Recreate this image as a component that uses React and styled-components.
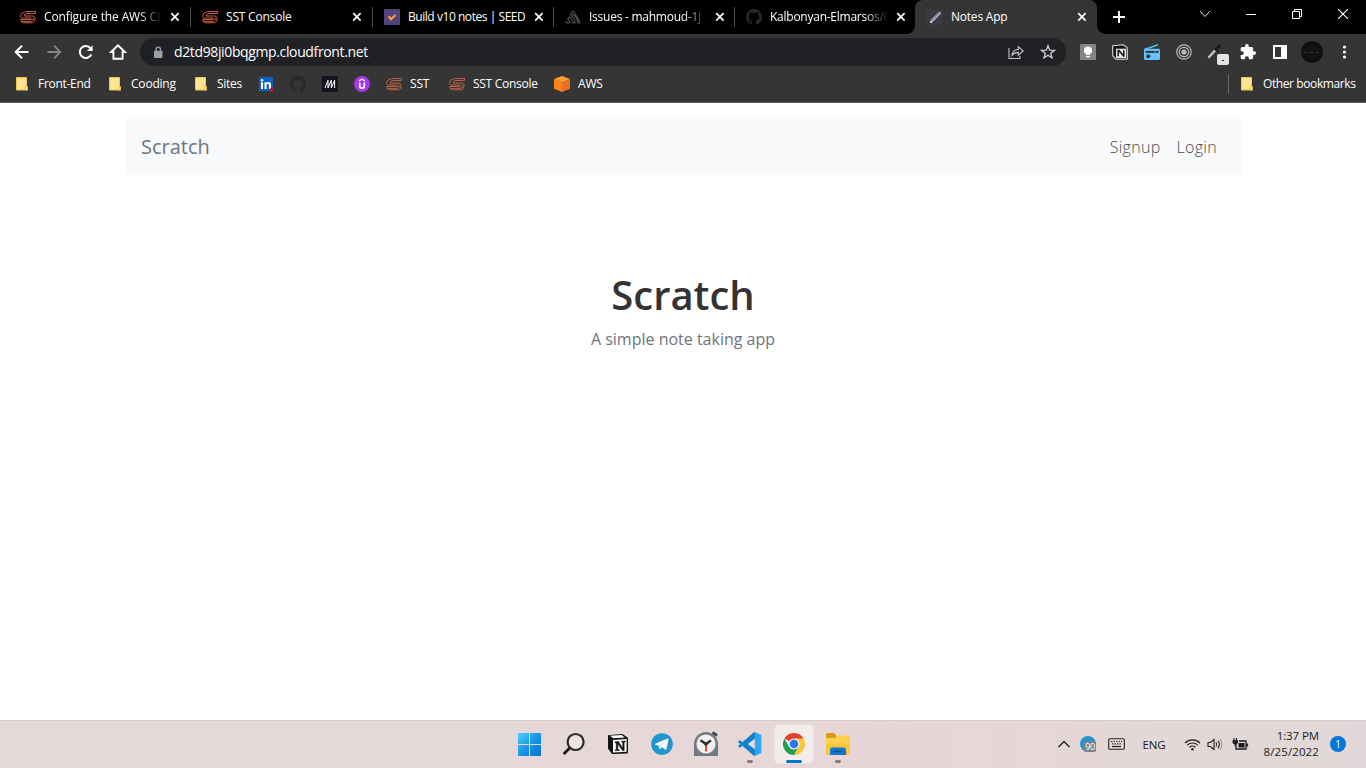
import React from 'react';
import styled, { createGlobalStyle, css } from 'styled-components';

const GlobalStyle = createGlobalStyle`
  *, *::before, *::after { box-sizing: border-box; }
  html, body { margin: 0; padding: 0; background: #fff; }
  body { font-family: "Open Sans", "Noto Sans", sans-serif; overflow: hidden; }
  svg { display: block; flex: none; }
`;

const Screen = styled.div`
  width: 1366px;
  height: 768px;
  display: flex;
  flex-direction: column;
  background: #fff;
`;

/* ---------- tab strip ---------- */
const TabStrip = styled.div`
  height: 34px;
  flex: none;
  display: flex;
  background: #000;
  padding-left: 8px;
`;
const Tab = styled.div`
  width: ${(p) => p.$w}px;
  height: 34px;
  flex: none;
  display: flex;
  align-items: center;
  padding-left: 12px;
  position: relative;
  ${(p) =>
    p.$active
      ? css`
          background: #353535;
          border-radius: 8px 8px 0 0;
          &::before, &::after {
            content: '';
            position: absolute;
            bottom: 0;
            width: 8px;
            height: 8px;
          }
          &::before { left: -8px; background: radial-gradient(circle at 0 0, transparent 7.5px, #353535 8px); }
          &::after { right: -8px; background: radial-gradient(circle at 100% 0, transparent 7.5px, #353535 8px); }
        `
      : ''}
`;
const TabDivider = styled.i`
  position: absolute;
  right: -1px;
  top: 7px;
  width: 1px;
  height: 20px;
  background: #4a4a4a;
`;
const TabTitle = styled.span`
  width: 118px;
  margin: 0 8px;
  height: 18px;
  line-height: 18px;
  font-size: 12px;
  letter-spacing: ${(p) => p.$ls || 0}px;
  color: #fff;
  white-space: nowrap;
  overflow: hidden;
  ${(p) => p.$fade && 'mask-image: linear-gradient(90deg, #000 94px, transparent 118px);'}
`;
const NewTab = styled.div`
  width: 44px;
  display: flex;
  align-items: center;
  justify-content: center;
`;
const WindowControls = styled.div`
  margin-left: auto;
  display: flex;
  height: 28px;
`;
const WindowButton = styled.div`
  width: 46px;
  display: flex;
  align-items: center;
  justify-content: center;
`;

/* ---------- toolbar ---------- */
const Toolbar = styled.div`
  height: 36px;
  flex: none;
  display: flex;
  align-items: center;
  background: #353535;
  padding-left: 6px;
`;
const ToolButton = styled.div`
  width: 32px;
  height: 32px;
  flex: none;
  display: flex;
  align-items: center;
  justify-content: center;
`;
const Omnibox = styled.div`
  width: 926px;
  height: 28px;
  margin: 0 6px;
  border-radius: 14px;
  background: #202124;
  display: flex;
  align-items: center;
  padding: 0 2px 0 13px;
`;
const Address = styled.span`
  flex: 1;
  margin-left: 11px;
  font-size: 14px;
  line-height: 20px;
  letter-spacing: -0.37px;
  color: #fff;
`;

/* ---------- bookmarks ---------- */
const BookmarksBar = styled.div`
  height: 33px;
  flex: none;
  display: flex;
  align-items: flex-start;
  padding: 5px 0 0 14px;
  background: #353535;
  border-bottom: 1px solid #5b5b5b;
`;
const Bookmark = styled.div`
  width: ${(p) => p.$w}px;
  height: 18px;
  flex: none;
  display: flex;
  align-items: center;
  gap: 8px;
`;
const BookmarkLabel = styled.span`
  font-size: 12px;
  line-height: 18px;
  letter-spacing: ${(p) => p.$ls || 0}px;
  color: #fff;
  white-space: nowrap;
`;
const OtherBookmarks = styled.div`
  margin-left: auto;
  padding-left: 10px;
  width: 138px;
  height: 18px;
  display: flex;
  align-items: center;
  gap: 8px;
  border-left: 1px solid #6a6a6a;
`;

/* ---------- page ---------- */
const Page = styled.main`
  flex: 1;
  display: flex;
  flex-direction: column;
  align-items: center;
  padding-top: 16px;
`;
const Navbar = styled.nav`
  width: 1116px;
  height: 56px;
  display: flex;
  align-items: center;
  padding: 0 24px 0 16px;
  background: #f8f9fb;
`;
const Brand = styled.a`
  font-size: 20px;
  line-height: 30px;
  color: #6c757d;
  margin-right: auto;
`;
const NavLink = styled.a`
  font-size: 16px;
  line-height: 24px;
  font-weight: 300;
  letter-spacing: 0.3px;
  color: #4c4c4c;
  margin-left: 16px;
`;
const Lander = styled.section`
  padding-top: 96px;
  text-align: center;
`;
const Title = styled.h1`
  margin: 0 0 8px;
  font-size: 40px;
  line-height: 48px;
  font-weight: 600;
  color: #333;
`;
const Subtitle = styled.p`
  margin: 0;
  font-size: 16px;
  line-height: 24px;
  color: #6c757d;
`;

/* ---------- taskbar ---------- */
const Taskbar = styled.footer`
  height: 48px;
  flex: none;
  display: flex;
  align-items: stretch;
  background: linear-gradient(90deg, #e2d9d8 0, #e5d8d8 35%, #e8d6d7 65%, #e0d8d8 100%);
  box-shadow: inset 0 1px #d8cdcd;
`;
const Apps = styled.div`
  display: flex;
  margin-left: 508px;
`;
const AppSlot = styled.div`
  width: 44px;
  display: flex;
  align-items: center;
  justify-content: center;
`;
const AppTile = styled.div`
  width: 38px;
  height: 38px;
  border-radius: 4px;
  display: flex;
  align-items: center;
  justify-content: center;
  position: relative;
  ${(p) => p.$focused && 'background: #f4ebeb; box-shadow: 0 0 0 1px #ebe0e0;'}
`;
const RunMark = styled.i`
  position: absolute;
  bottom: 0;
  left: 50%;
  transform: translateX(-50%);
  width: ${(p) => (p.$focused ? 16 : 6)}px;
  height: 3px;
  border-radius: 2px;
  background: ${(p) => (p.$focused ? '#0a74cc' : '#857f80')};
`;
const Tray = styled.div`
  margin-left: auto;
  display: flex;
  align-items: center;
  padding-right: 20px;
  color: #1b1b1b;
`;
const TrayItem = styled.div`
  width: ${(p) => p.$w}px;
  display: flex;
  justify-content: center;
`;
const Language = styled.span`
  width: 48px;
  padding-right: 4px;
  text-align: center;
  font-size: 11.5px;
  letter-spacing: -0.2px;
`;
const Clock = styled.div`
  width: 66px;
  margin-right: 11px;
  text-align: right;
  font-size: 11.5px;
  line-height: 16px;
  white-space: nowrap;
`;
const ClockTime = styled.div`letter-spacing: -0.1px;`;
const ClockDate = styled.div`letter-spacing: 0.12px;`;
const Notice = styled.span`
  width: 16px;
  height: 16px;
  border-radius: 50%;
  background: #0078d7;
  color: #fff;
  font-size: 10.5px;
  line-height: 16px;
  text-align: center;
`;

/* ---------- icons ---------- */
const Svg = ({ s = 16, w, h, vb, children, ...rest }) => (
  <svg width={w || s} height={h || s} viewBox={vb || `0 0 ${w || s} ${h || s}`} fill="none" {...rest}>
    {children}
  </svg>
);
const SstIcon = ({ color = '#d9694c' }) => (
  <Svg stroke={color} strokeWidth=".9" strokeLinejoin="round">
    <path d="M15.500 2.500H5.500L1.500 4.500.5 7.500l1 1.500h9.500v1.500H.700" />
    <path d="M15.300 4.500H6L4.500 5.500v1.500h8.500l2.200 1.500-.7 4-2 1.300H3.500L1 12.500" />
    <path d="M15.500 2.500v2M.7 10.500l.5 1.900h10.300l1.500-1.400.4-2.200" />
  </Svg>
);
const SeedIcon = () => (
  <Svg>
    <rect width="16" height="16" rx="1" fill="#51437f" />
    <path d="M4.500 7.300l2.500 2.900 4.500-4.300" stroke="#f9a13a" strokeWidth="2.1" />
  </Svg>
);
const SentryIcon = () => (
  <Svg stroke="#4d4a50" strokeWidth="1.2" strokeLinejoin="round">
    <path d="M5.2 6.300L7.200 2.600c.4-.7 1.200-.7 1.600 0l6 10c.4.7.1 1.300-.6 1.300h-1.500c.1-4-2.200-7.300-5.700-8.800" />
    <path d="M5.200 6.300c3 1.300 4.800 4.100 4.900 7.600H7.900c-.2-2.500-1.500-4.500-3.900-5.600L2.700 10.500c1.600.7 2.500 1.800 2.700 3.400H1.800c-.7 0-1-.7-.6-1.300l.5-.8" />
  </Svg>
);
const GithubIcon = () => (
  <Svg vb="0 0 16 16">
    <path fill="#24292f" d="M8 0C3.580 0 0 3.580 0 8c0 3.540 2.290 6.530 5.470 7.590.4.070.55-.17.55-.38 0-.19-.01-.82-.01-1.490-2.010.37-2.530-.49-2.690-.94-.09-.23-.48-.94-.82-1.130-.28-.15-.68-.52-.01-.53.63-.01 1.080.58 1.230.82.72 1.210 1.870.87 2.330.66.070-.52.28-.87.51-1.070-1.780-.2-3.640-.89-3.640-3.950 0-.87.31-1.590.82-2.150-.08-.2-.36-1.020.08-2.120 0 0 .67-.21 2.200.82.64-.18 1.320-.27 2-.27s1.360.09 2 .27c1.530-1.040 2.200-.82 2.200-.82.44 1.100.16 1.920.08 2.120.51.56.82 1.270.82 2.150 0 3.070-1.870 3.750-3.650 3.950.29.25.54.73.54 1.480 0 1.070-.01 1.930-.01 2.200 0 .21.15.46.55.38A8.010 8.010 0 0 0 16 8c0-4.420-3.580-8-8-8z" />
  </Svg>
);
const PencilIcon = () => (
  <Svg>
    <rect width="16" height="16" fill="#3b3b3f" />
    <path d="M3 14l1-3.200L12.300 2.400l1.900 1.800L6 12.700z" fill="#b9b6d8" />
    <path d="M4.500 12L12.700 3.500" stroke="#5b5877" strokeWidth=".8" />
    <path d="M3 14l.7-2 1.500 1.300z" fill="#fff" />
  </Svg>
);
const CloseIcon = () => (
  <Svg s={10} stroke="#fff" strokeWidth="1.7"><path d="M1.200 1.200l7.400 7.400M8.600 1.200L1.200 8.600" /></Svg>
);
const FolderIcon = () => (
  <Svg>
    <path d="M2.500 1.500h10v9l1 3.500H2.500z" fill="#ffe591" stroke="#efc64d" />
    <path d="M11 14V11.500q0-1 1-1h1.500V14z" fill="#ffe591" stroke="#eabf42" strokeWidth=".9" />
  </Svg>
);
const LinkedinIcon = () => (
  <Svg>
    <rect x="1" y="1" width="14" height="14" rx="1" fill="#0a66c2" />
    <path d="M3 6.300h2V13H3zM6.500 6.300h2v.9c.5-.7 1.100-1.100 2-1.100 1.800 0 2.500 1.100 2.500 2.900v4h-2V9.400c0-.9-.3-1.500-1.100-1.500-.9 0-1.400.6-1.400 1.600V13h-2z" fill="#fff" />
    <circle cx="4" cy="4.200" r="1.200" fill="#fff" />
    <circle cx="13.800" cy="13.400" r="2" fill="#d11124" />
  </Svg>
);
const MIcon = () => (
  <Svg>
    <rect width="16" height="16" fill="#14141f" />
    <path d="M3 12L6 4.300V12L9.300 4.300V12L12.600 4.300V12" stroke="#fff" strokeWidth="1" />
  </Svg>
);
const UdemyIcon = () => (
  <Svg>
    <circle cx="8" cy="8" r="8" fill="#a435f0" />
    <path d="M5 4.900l3-1.700 3 1.700" stroke="#fff" strokeWidth="1.300" />
    <path d="M5.700 6.400v3.300c0 1.600.8 2.500 2.300 2.500s2.300-.9 2.300-2.500V6.400" stroke="#fff" strokeWidth="1.700" />
  </Svg>
);
const AwsIcon = () => (
  <Svg>
    <path d="M8 0l8 3-8 3.600L0 3z" fill="#ff9c2e" />
    <path d="M0 3l8 3.600V16l-8-3.300z" fill="#f8871f" />
    <path d="M16 3L8 6.600V16l8-3.300z" fill="#ef701c" />
  </Svg>
);
const NotionIcon = ({ s = 16 }) => (
  <Svg s={s} vb="0 0 22 22">
    <path d="M1 2.300L14.500 1q1-.1 1.800.5l3.900 2.800q.8.600.8 1.500v13.400q0 1.300-1.300 1.400L6.300 21q-1 .1-1.600-.6L1.500 16.300Q1 15.600 1 14.800z" fill="#141414" />
    <path d="M2.900 2.700l11.600-.8 3.400 2.500-11.700.8z" fill="#fff" />
    <path d="M6 6.900L19.600 6v12.700L6 19.500z" fill="#fff" />
    <path d="M8 8.800l3.500-.3 4.200 6.700V9.300l-1.300-.2v-.9l4-.2v.9l-1.200.4v8.300l-1.700.2-4.600-7.100v5.700l1.400.3v.9l-4.200.2v-.9l1.200-.4V9.900L8 9.700z" fill="#141414" stroke="#141414" strokeWidth=".5" />
  </Svg>
);

const toolIcons = {
  back: <Svg stroke="#fff" strokeWidth="2"><path d="M14.500 8H2M8 1.700L1.700 8 8 14.300" /></Svg>,
  forward: <Svg stroke="#858585" strokeWidth="1.800"><path d="M1.500 8H14M8 1.700L14.300 8 8 14.300" /></Svg>,
  reload: <Svg><path d="M13.300 10.500A6 6 0 1 1 12.500 4.100" stroke="#fff" strokeWidth="2" /><path d="M14.700 1.200V7H8.900z" fill="#fff" /></Svg>,
  home: <Svg s={18} stroke="#fff" strokeWidth="1.900"><path d="M9 2.300L2.200 9h2.200v6.800h9.200V9h2.200z" /></Svg>,
  lock: <Svg w={10} h={13}><rect x="1" y="4.800" width="8.500" height="7.200" rx="1" fill="#9aa0a6" /><path d="M3 5V3.400a2.200 2.200 0 0 1 4.500 0V5" stroke="#9aa0a6" strokeWidth="1.400" /></Svg>,
  share: <Svg stroke="#c4c6c9" strokeWidth="1.100"><path d="M1 4v10.500h11V12M4 11.300c.4-3.800 2.400-5.700 6.300-5.800V2.700L15.200 7l-4.900 4.200V8.400C7.500 8.300 5.600 9.200 4 11.300z" /></Svg>,
  star: <Svg stroke="#d0d1d3" strokeWidth="1.300"><path d="M8 1.800l1.700 4.400 4.700.2-3.700 2.900 1.300 4.500L8 11.300l-4 2.500 1.300-4.500-3.700-2.900 4.700-.2z" /></Svg>,
};
const extensions = {
  bulb: <Svg><rect width="16" height="16" rx="1" fill="#80868b" /><path d="M8 2.600a4 4 0 0 0-2 7.500v.9h4v-.9a4 4 0 0 0-2-7.500z" fill="#fff" /><path d="M6 12.700h4" stroke="#fff" strokeWidth="1.300" /></Svg>,
  notion: (
    <Svg vb="0 0 22 22">
      <path d="M1 2.300L15 1l6 4v16L5.500 21 1 16z" fill="#151515" stroke="#ddd" strokeWidth="1.500" strokeLinejoin="round" />
      <path d="M5.500 6.500h14v13h-14z" fill="#e4e4e4" />
      <path d="M8.500 17V8.800h1l6.500 7.800h.2V8.500" stroke="#151515" strokeWidth="2.100" />
    </Svg>
  ),
  radio: (
    <Svg w={18} h={16}>
      <path d="M1.500 5.500L15 .8" stroke="#55bdf5" strokeWidth="1.500" />
      <rect x="1" y="4.800" width="16" height="11.200" rx="1.400" fill="#62c4fb" />
      <path d="M2.500 6.900h13v2h-13z" fill="#353535" />
      <path d="M12 6.500v2" stroke="#62c4fb" />
      <circle cx="5.200" cy="12.300" r="2.100" fill="#353535" />
    </Svg>
  ),
  rings: <Svg stroke="#b9b9b9" strokeWidth="1.200"><circle cx="8" cy="8" r="7.200" /><circle cx="8" cy="8" r="4.700" /><circle cx="8" cy="8" r="2.600" fill="#bbb" stroke="none" /></Svg>,
  picker: (
    <Svg w={26} h={26}>
      <path d="M6 18L12.500 11" stroke="#c4c4c4" strokeWidth="2.500" strokeLinecap="round" />
      <path d="M11.500 9.500l4 3.500" stroke="#1a1a1a" strokeWidth="1.500" />
      <path d="M13 10.500l3.500-3.500" stroke="#1a1a1a" strokeWidth="3" strokeLinecap="round" />
      <rect x="14" y="15" width="12" height="11" rx="2" fill="#e4e4e4" /><rect x="19" y="21" width="2" height="1" fill="#333" />
    </Svg>
  ),
  puzzle: <Svg vb="1 1 22 22"><path fill="#fff" d="M20.500 11H19V7c0-1.100-.9-2-2-2h-4V3.500a2.500 2.500 0 0 0-5 0V5H4c-1.100 0-2 .9-2 2v3.800h1.500c1.500 0 2.700 1.200 2.700 2.700S5 16.200 3.500 16.200H2V20c0 1.100.9 2 2 2h3.800v-1.500c0-1.500 1.200-2.700 2.700-2.700s2.700 1.200 2.700 2.700V22H17c1.100 0 2-.9 2-2v-4h1.500a2.500 2.500 0 0 0 0-5z" /></Svg>,
  panel: <Svg><path d="M1 1h14v14H1zM3 3v10h6V3z" fill="#fff" fillRule="evenodd" /></Svg>,
  avatar: <Svg s={22}><circle cx="11" cy="11" r="11" fill="#121212" /><path d="M2.500 11.500h17" stroke="#333" strokeDasharray="3.500 2.500" /></Svg>,
  menu: <Svg fill="#fff"><circle cx="8.500" cy="3" r="1.600" fill="#fff" /><circle cx="8.500" cy="8" r="1.600" fill="#fff" /><circle cx="8.500" cy="13" r="1.600" fill="#fff" /></Svg>,
};

const StartIcon = () => (
  <Svg s={24}>
    <defs>
      <linearGradient id="start" x1="0" y1="0" x2="24" y2="24" gradientUnits="userSpaceOnUse">
        <stop stopColor="#4fd0fb" /><stop offset=".5" stopColor="#1897e4" /><stop offset="1" stopColor="#0670ca" />
      </linearGradient>
    </defs>
    <path fill="url(#start)" d="M0 1h11v11H0zM12 1h11v11H12zM0 13h11v11H0zM12 13h11v11H12z" />
  </Svg>
);
const SearchIcon = () => (
  <Svg s={24}>
    <circle cx="13.600" cy="10" r="8" stroke="#2a2a2a" strokeWidth="2.200" fill="#eee3e3" />
    <path d="M7.700 16L2.500 21.300" stroke="#1d1d1d" strokeWidth="2.800" strokeLinecap="round" />
  </Svg>
);
const TelegramIcon = () => (
  <Svg s={22}>
    <circle cx="11" cy="11" r="10.800" fill="#2295ce" />
    <path d="M4.300 10.800l12.200-5.200c.7-.3 1.200.1 1 .9l-2 9.500c-.2.800-.7.900-1.300.5L11 14.200l-1.600 1.600c-.5.500-.9.300-1-.3l-.8-2.800-3.200-1c-.7-.2-.7-.6-.1-.9z" fill="#fff" />
    <path d="M8.200 12.400l6.400-4.600-4.900 5.300-.5 2z" fill="#b9d9ea" />
  </Svg>
);
const ClockIcon = () => (
  <Svg s={26}>
    <path d="M19.500 1.500l4.500 3" stroke="#40464c" strokeWidth="3" />
    <path d="M1 13A12 12 0 0 1 13 1a12 12 0 0 1 12 12v12H1z" fill="#717a82" />
    <circle cx="13" cy="13" r="9.600" fill="#f1f1f1" />
    <path d="M13 13v7.500" stroke="#e24a26" strokeWidth="2" />
    <path d="M7.500 9.200L13 13l5-3.600" stroke="#2b2b2b" strokeWidth="2.300" />
    <circle cx="13" cy="13" r="1.800" fill="#2b2b2b" />
  </Svg>
);
const CodeIcon = () => (
  <Svg s={26} vb="0 0 24 24">
    <path d="M17 1L6.500 11.400 2.600 8.500l-1.400.9v1l13.800 12 2 .7z" fill="#1080cc" />
    <path d="M17 23L6.500 12.600 2.600 15.500l-1.400-.9v-1l13.800-12 2-.7z" fill="#1080cc" />
    <path d="M16.500 1L22.500 3.600v16.800L16.500 23z" fill="#2fa8f3" />
    <path d="M16.500 7v10L10 12z" fill="#e7d7d8" />
  </Svg>
);
const ChromeIcon = () => (
  <Svg s={22} vb="0 0 24 24">
    <circle cx="12" cy="12" r="12" fill="#fff" />
    <path d="M12 12L1.600 6A12 12 0 0 1 22.400 6z" fill="#df4032" />
    <path d="M12 6h10.400A12 12 0 0 1 12 24l5.200-9z" fill="#fcc934" />
    <path d="M6.800 15L1.600 6A12 12 0 0 0 12 24l5.200-9z" fill="#269c4c" />
    <circle cx="12" cy="12" r="6" fill="#fff" />
    <circle cx="12" cy="12" r="4.800" fill="#2f75e5" />
  </Svg>
);
const ExplorerIcon = () => (
  <Svg w={26} h={24}>
    <path d="M1 3q0-2 2-2h6l2.500 3v5H1z" fill="#d99a16" />
    <path d="M1 6h9l2-2.500h11q2 0 2 2V21q0 2-2 2H3q-2 0-2-2z" fill="#fdd04b" />
    <path d="M1 12h24v9q0 2-2 2H3q-2 0-2-2z" fill="#fbc53a" />
    <path d="M5 23v-5q0-2.500 2.500-2.500h11q2.500 0 2.500 2.500v5z" fill="#1277cf" />
    <path d="M8.500 19.500h9" stroke="#0b5399" strokeWidth="1.500" />
  </Svg>
);
const trayIcons = {
  chevron: <Svg w={14} h={10} stroke="#222" strokeWidth="1.400"><path d="M1.500 8L7 2.500 12.500 8" /></Svg>,
  keyboard: (
    <Svg w={17} h={12} stroke="#222">
      <rect x=".7" y=".7" width="15.600" height="10.600" rx="1.300" strokeWidth="1.100" />
      <path d="M3 3.500h11M4 5.800h10" strokeDasharray="1.300 1.200" strokeWidth="1.200" /><path d="M4 8.500h9" strokeWidth="1.200" />
    </Svg>
  ),
  wifi: (
    <Svg w={17} h={13} stroke="#222" strokeWidth="1.200">
      <path d="M1 5a10.600 10.600 0 0 1 15 0M3.200 7.200a7.500 7.500 0 0 1 10.600 0M5.400 9.400a4.400 4.400 0 0 1 6.200 0" /><circle cx="8.500" cy="11.300" r="1.300" fill="#222" stroke="none" />
    </Svg>
  ),
  sound: (
    <Svg w={17} h={13} stroke="#222" strokeWidth="1.100">
      <path d="M1 4.500h2.500L7 1.500v10l-3.500-3H1zM9 4.300q1.300 2.200 0 4.400M11 2.700q2.500 3.800 0 7.600" /><path d="M13 1q3.800 5.500 0 11" stroke="#999091" />
    </Svg>
  ),
  battery: (
    <Svg w={17} h={13}>
      <path d="M4 5.500V11h10V3H7" stroke="#1d1d1d" strokeWidth="1.300" /><path d="M6.500 5h6v4.500h-6z" fill="#1d1d1d" />
      <path d="M14.500 5.500h1.600v3h-1.600z" fill="#1d1d1d" /><path d="M.5 2.300h5.500v2.200q-.4 1.500-2.100 1.800v2H2.600v-2Q.9 6 .5 4.500z" fill="#1d1d1d" /><path d="M2 0v3M4.500 0v3" stroke="#1d1d1d" strokeWidth="1.100" />
    </Svg>
  ),
};

const TempBadge = styled.div`
  width: 16px;
  height: 16px;
  border-radius: 50%;
  background: #2496cf;
  position: relative;
`;
const TempValue = styled.span`
  position: absolute;
  left: 4px;
  top: 5px;
  width: 12px;
  height: 11px;
  border-radius: 2px;
  background: #7b8386;
  color: #fff;
  font-size: 9px;
  line-height: 11px;
  text-align: center;
  letter-spacing: -0.5px;
`;

const tabs = [
  { icon: <SstIcon />, title: 'Configure the AWS CLI', w: 182, fade: true, ls: -0.12 },
  { icon: <SstIcon />, title: 'SST Console', w: 182, ls: -0.2 },
  { icon: <SeedIcon />, title: 'Build v10 notes | SEED', w: 181, ls: -0.45 },
  { icon: <SentryIcon />, title: 'Issues - mahmoud-1j -', w: 181, fade: true, ls: -0.25 },
  { icon: <GithubIcon />, title: 'Kalbonyan-Elmarsos/0', w: 181, fade: true, ls: -0.25 },
  { icon: <PencilIcon />, title: 'Notes App', w: 182, active: true, ls: -0.22 },
];
const bookmarks = [
  { icon: <FolderIcon />, label: 'Front-End', w: 93, ls: -0.3 },
  { icon: <FolderIcon />, label: 'Cooding', w: 86, ls: -0.2 },
  { icon: <FolderIcon />, label: 'Sites', w: 65, ls: -0.3 },
  { icon: <LinkedinIcon />, w: 32 },
  { icon: <GithubIcon />, w: 32 },
  { icon: <MIcon />, w: 32 },
  { icon: <UdemyIcon />, w: 32 },
  { icon: <SstIcon color="#c9674e" />, label: 'SST', w: 63, ls: -0.2 },
  { icon: <SstIcon color="#c9674e" />, label: 'SST Console', w: 105, ls: -0.28 },
  { icon: <AwsIcon />, label: 'AWS', w: 60, ls: -0.2 },
];
const apps = [
  { id: 'start', icon: <StartIcon /> },
  { id: 'search', icon: <SearchIcon /> },
  { id: 'notion', icon: <NotionIcon s={22} /> },
  { id: 'telegram', icon: <TelegramIcon /> },
  { id: 'clock', icon: <ClockIcon /> },
  { id: 'code', icon: <CodeIcon />, running: true },
  { id: 'chrome', icon: <ChromeIcon />, running: true, focused: true },
  { id: 'explorer', icon: <ExplorerIcon />, running: true },
];

export default function App() {
  return (
    <Screen>
      <GlobalStyle />
      <TabStrip>
        {tabs.map((t, i) => (
          <Tab key={t.title} $w={t.w} $active={t.active}>
            {t.icon}
            <TabTitle $fade={t.fade} $ls={t.ls}>{t.title}</TabTitle>
            <CloseIcon />
            {i < 4 && <TabDivider />}
          </Tab>
        ))}
        <NewTab><Svg s={12} stroke="#fff" strokeWidth="2"><path d="M6 0v12M0 6h12" /></Svg></NewTab>
        <WindowControls>
          <WindowButton><Svg w={12} h={8} stroke="#e8e8e8"><path d="M1 1l5 5.500L11 1" /></Svg></WindowButton>
          <WindowButton><Svg s={10} stroke="#fff"><path d="M0 5.500h10" /></Svg></WindowButton>
          <WindowButton><Svg s={10} stroke="#fff"><path d="M.5 2.500h7v7h-7zM2.500 2.500v-2h7v7h-2" /></Svg></WindowButton>
          <WindowButton><Svg s={10} stroke="#fff" strokeWidth="1.100"><path d="M0 0l10 10M10 0L0 10" /></Svg></WindowButton>
        </WindowControls>
      </TabStrip>
      <Toolbar>
        <ToolButton>{toolIcons.back}</ToolButton>
        <ToolButton>{toolIcons.forward}</ToolButton>
        <ToolButton>{toolIcons.reload}</ToolButton>
        <ToolButton>{toolIcons.home}</ToolButton>
        <Omnibox>
          {toolIcons.lock}
          <Address>d2td98ji0bqgmp.cloudfront.net</Address>
          <ToolButton>{toolIcons.share}</ToolButton>
          <ToolButton>{toolIcons.star}</ToolButton>
        </Omnibox>
        {Object.entries(extensions).map(([id, icon]) => <ToolButton key={id}>{icon}</ToolButton>)}
      </Toolbar>
      <BookmarksBar>
        {bookmarks.map((b, i) => (
          <Bookmark key={i} $w={b.w}>
            {b.icon}
            {b.label && <BookmarkLabel $ls={b.ls}>{b.label}</BookmarkLabel>}
          </Bookmark>
        ))}
        <OtherBookmarks>
          <FolderIcon />
          <BookmarkLabel $ls={-0.4}>Other bookmarks</BookmarkLabel>
        </OtherBookmarks>
      </BookmarksBar>
      <Page>
        <Navbar>
          <Brand>Scratch</Brand>
          <NavLink>Signup</NavLink>
          <NavLink>Login</NavLink>
        </Navbar>
        <Lander>
          <Title>Scratch</Title>
          <Subtitle>A simple note taking app</Subtitle>
        </Lander>
      </Page>
      <Taskbar>
        <Apps>
          {apps.map((a) => (
            <AppSlot key={a.id}>
              <AppTile $focused={a.focused}>
                {a.icon}
                {a.running && <RunMark $focused={a.focused} />}
              </AppTile>
            </AppSlot>
          ))}
        </Apps>
        <Tray>
          <TrayItem $w={24}>{trayIcons.chevron}</TrayItem>
          <TrayItem $w={24}><TempBadge><TempValue>90</TempValue></TempBadge></TrayItem>
          <TrayItem $w={32}>{trayIcons.keyboard}</TrayItem>
          <Language>ENG</Language>
          <TrayItem $w={24}>{trayIcons.wifi}</TrayItem>
          <TrayItem $w={23}>{trayIcons.sound}</TrayItem>
          <TrayItem $w={26}>{trayIcons.battery}</TrayItem>
          <Clock>
            <ClockTime>1:37 PM</ClockTime>
            <ClockDate>8/25/2022</ClockDate>
          </Clock>
          <Notice>1</Notice>
        </Tray>
      </Taskbar>
    </Screen>
  );
}
